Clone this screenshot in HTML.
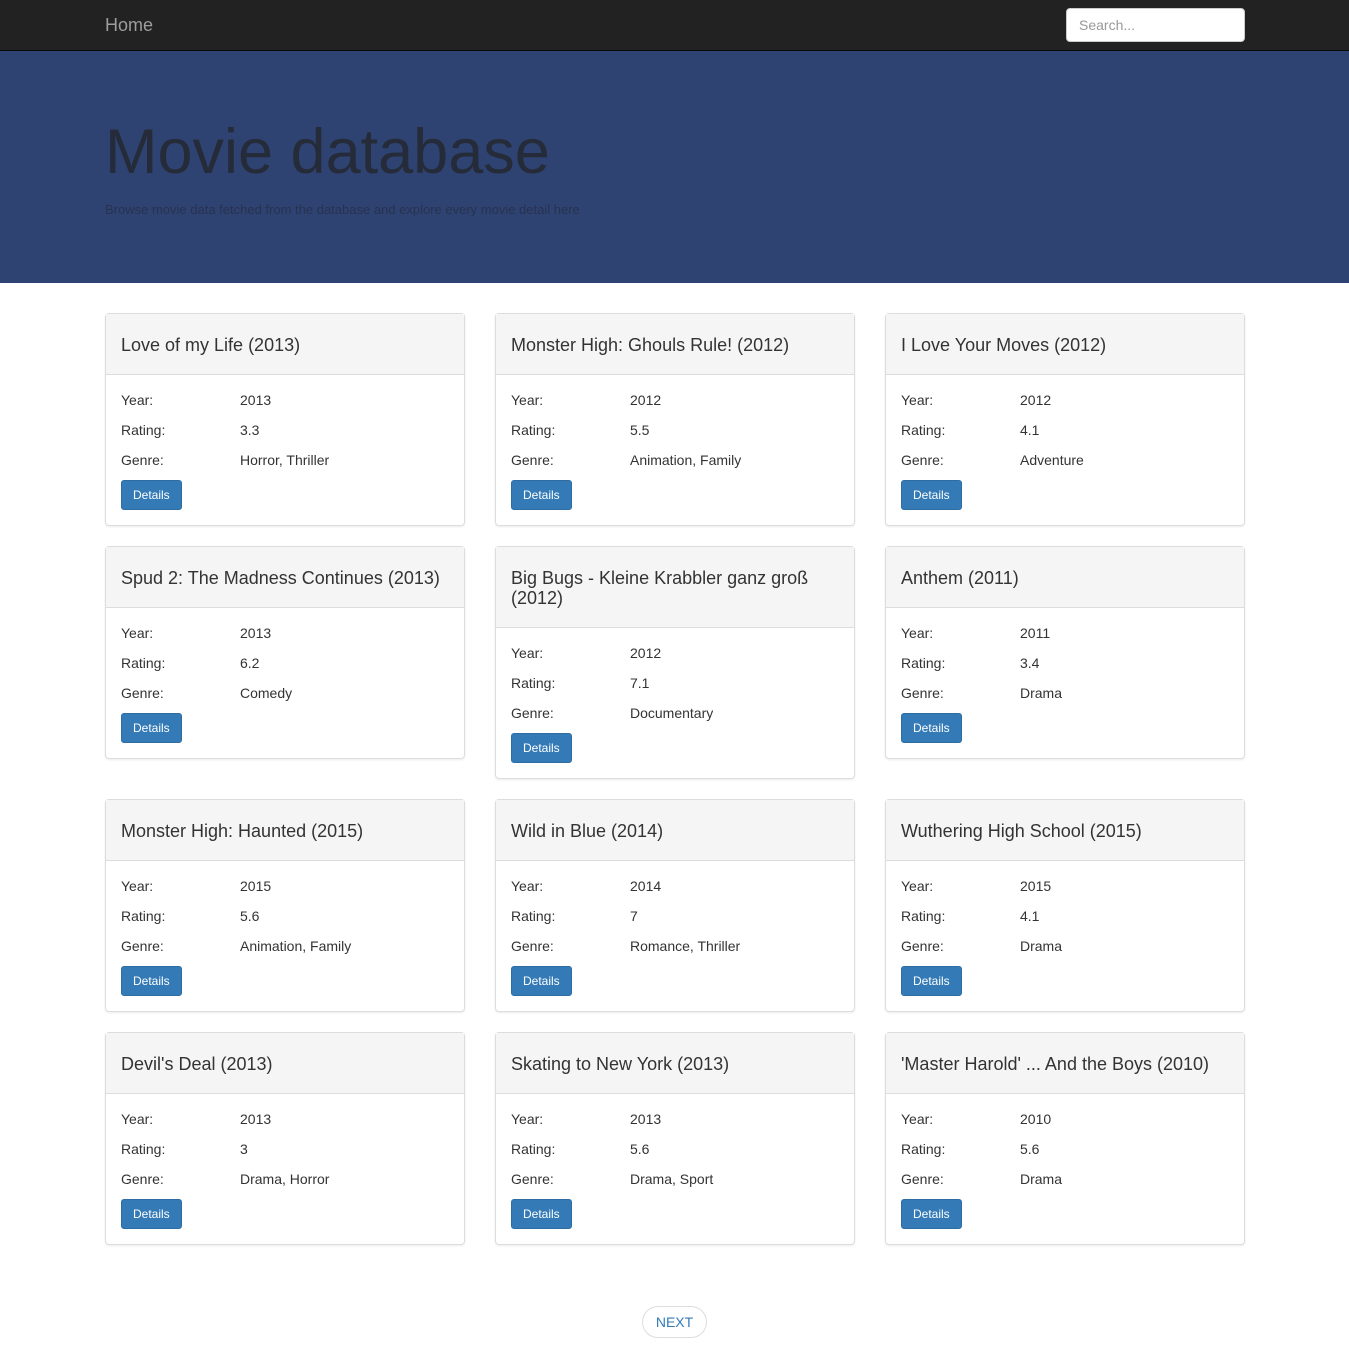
<!DOCTYPE html>
<html><head><meta charset="utf-8"><style>
*{box-sizing:border-box}
body{margin:0;font-family:"Liberation Sans",sans-serif;color:#333;font-size:14px;background:#fff;width:1349px;height:1358px;overflow:hidden}
.nav{height:51px;background:#222;border-bottom:1px solid #080808;position:relative}
.nav .home{position:absolute;left:105px;top:15px;color:#9d9d9d;font-size:18px}
.nav .search{position:absolute;left:1066px;top:8px;width:179px;height:34px;background:#fff;border:1px solid #ccc;border-radius:4px;padding:8px 12px;color:#999;font-size:14px}
.jumbo{background:#2e4372;height:232px;position:relative}
.jumbo h1{position:absolute;left:105px;top:66px;margin:0;font-size:63px;font-weight:normal;color:#252b38;line-height:70px}
.jumbo p{position:absolute;left:105px;top:151px;margin:0;font-size:13px;color:#283250}
.grid{position:absolute;left:105px;top:313px;width:1140px;display:flex;flex-wrap:wrap;gap:20px 30px;align-items:flex-start}
.card{width:360px;border:1px solid #ddd;border-radius:4px;box-shadow:0 1px 2px rgba(0,0,0,.08);background:#fff}
.card .h{background:#f5f5f5;border-bottom:1px solid #ddd;padding:21px 15px 19px;font-size:18px;line-height:20px;color:#333}
.card .b{padding:15px 15px 15px}
.row{display:flex;height:30px;line-height:20px}
.row span:first-child{width:119px}
.btn{display:inline-block;margin-top:0;background:#337ab7;border:1px solid #2e6da4;color:#fff;border-radius:3px;font-size:12px;padding:7px 11px;line-height:14px}
.next{position:absolute;left:642px;top:1306px;width:65px;height:32px;border:1px solid #ddd;border-radius:16px;text-align:center;line-height:30px;color:#337ab7;font-size:14px}
</style></head><body>
<div class="nav"><span class="home">Home</span><div class="search">Search...</div></div>
<div class="jumbo"><h1>Movie database</h1><p>Browse movie data fetched from the database and explore every movie detail here</p></div>
<div class="grid">
<div class="card"><div class="h">Love of my Life (2013)</div><div class="b"><div class="row"><span>Year:</span><span>2013</span></div><div class="row"><span>Rating:</span><span>3.3</span></div><div class="row"><span>Genre:</span><span>Horror, Thriller</span></div><span class="btn">Details</span></div></div>
<div class="card"><div class="h">Monster High: Ghouls Rule! (2012)</div><div class="b"><div class="row"><span>Year:</span><span>2012</span></div><div class="row"><span>Rating:</span><span>5.5</span></div><div class="row"><span>Genre:</span><span>Animation, Family</span></div><span class="btn">Details</span></div></div>
<div class="card"><div class="h">I Love Your Moves (2012)</div><div class="b"><div class="row"><span>Year:</span><span>2012</span></div><div class="row"><span>Rating:</span><span>4.1</span></div><div class="row"><span>Genre:</span><span>Adventure</span></div><span class="btn">Details</span></div></div>
<div class="card"><div class="h">Spud 2: The Madness Continues (2013)</div><div class="b"><div class="row"><span>Year:</span><span>2013</span></div><div class="row"><span>Rating:</span><span>6.2</span></div><div class="row"><span>Genre:</span><span>Comedy</span></div><span class="btn">Details</span></div></div>
<div class="card"><div class="h">Big Bugs - Kleine Krabbler ganz groß (2012)</div><div class="b"><div class="row"><span>Year:</span><span>2012</span></div><div class="row"><span>Rating:</span><span>7.1</span></div><div class="row"><span>Genre:</span><span>Documentary</span></div><span class="btn">Details</span></div></div>
<div class="card"><div class="h">Anthem (2011)</div><div class="b"><div class="row"><span>Year:</span><span>2011</span></div><div class="row"><span>Rating:</span><span>3.4</span></div><div class="row"><span>Genre:</span><span>Drama</span></div><span class="btn">Details</span></div></div>
<div class="card"><div class="h">Monster High: Haunted (2015)</div><div class="b"><div class="row"><span>Year:</span><span>2015</span></div><div class="row"><span>Rating:</span><span>5.6</span></div><div class="row"><span>Genre:</span><span>Animation, Family</span></div><span class="btn">Details</span></div></div>
<div class="card"><div class="h">Wild in Blue (2014)</div><div class="b"><div class="row"><span>Year:</span><span>2014</span></div><div class="row"><span>Rating:</span><span>7</span></div><div class="row"><span>Genre:</span><span>Romance, Thriller</span></div><span class="btn">Details</span></div></div>
<div class="card"><div class="h">Wuthering High School (2015)</div><div class="b"><div class="row"><span>Year:</span><span>2015</span></div><div class="row"><span>Rating:</span><span>4.1</span></div><div class="row"><span>Genre:</span><span>Drama</span></div><span class="btn">Details</span></div></div>
<div class="card"><div class="h">Devil's Deal (2013)</div><div class="b"><div class="row"><span>Year:</span><span>2013</span></div><div class="row"><span>Rating:</span><span>3</span></div><div class="row"><span>Genre:</span><span>Drama, Horror</span></div><span class="btn">Details</span></div></div>
<div class="card"><div class="h">Skating to New York (2013)</div><div class="b"><div class="row"><span>Year:</span><span>2013</span></div><div class="row"><span>Rating:</span><span>5.6</span></div><div class="row"><span>Genre:</span><span>Drama, Sport</span></div><span class="btn">Details</span></div></div>
<div class="card"><div class="h">'Master Harold' ... And the Boys (2010)</div><div class="b"><div class="row"><span>Year:</span><span>2010</span></div><div class="row"><span>Rating:</span><span>5.6</span></div><div class="row"><span>Genre:</span><span>Drama</span></div><span class="btn">Details</span></div></div>
</div>
<div class="next">NEXT</div>
</body></html>
